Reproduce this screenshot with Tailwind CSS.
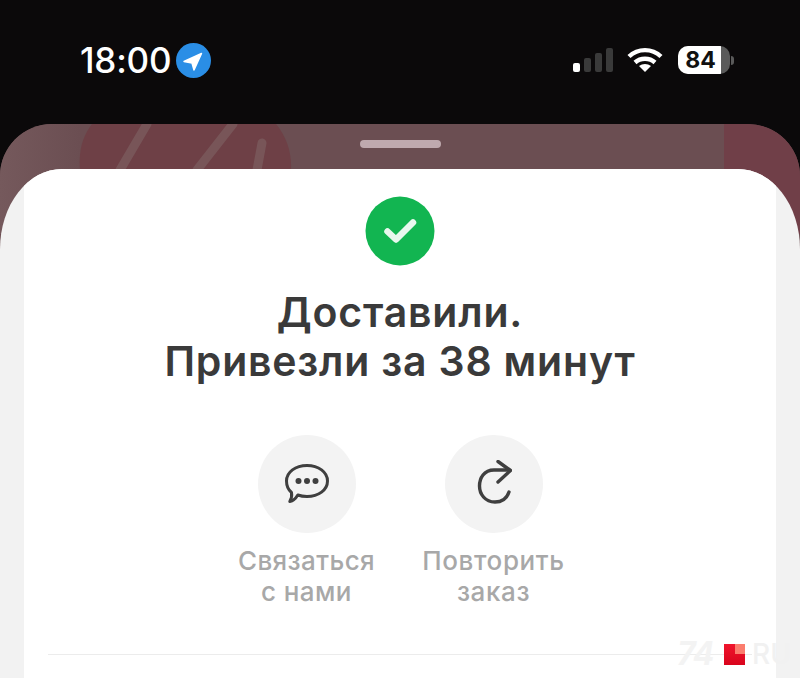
<!DOCTYPE html>
<html lang="ru">
<head>
<meta charset="utf-8">
<script src="https://cdn.jsdelivr.net/npm/@tailwindcss/browser@4"></script>
</head>
<body class="bg-[#0b090a] font-['Inter','Noto_Sans',sans-serif]">
<div class="relative w-[800px] h-[678px] overflow-hidden bg-[#0b090a]">
  <header class="h-[124px] flex items-start justify-between pl-[80px] pr-[66px] pt-[41px]">
    <div class="flex items-center gap-[5px] h-[38px]">
      <span class="text-white text-[35px] leading-[38px] font-medium tracking-[-0.2px]">18:00</span>
      <svg width="35" height="35" viewBox="0 0 35 35"><circle cx="17.5" cy="17.5" r="17.5" fill="#2a8ee6"/><path d="M8 18.500 25.500 10.500 18 27 16 20Z" fill="#fff" stroke="#fff" stroke-width="1.500" stroke-linejoin="round"/></svg>
    </div>
    <div class="flex items-center h-[38px]">
      <svg width="40" height="26" viewBox="0 0 40 26" class="mr-[14px]"><rect x="0" y="16" width="7" height="9" rx="2" fill="#fff"/><rect x="11" y="11" width="7" height="14" rx="2" fill="#3a3a3a"/><rect x="22" y="6" width="7" height="19" rx="2" fill="#3a3a3a"/><rect x="33" y="1" width="7" height="24" rx="2" fill="#3a3a3a"/></svg>
      <svg width="36" height="26" viewBox="0 0 36 26" class="mr-[15px]" fill="none" stroke="#fff" stroke-width="4.400"><path d="M2 9.500C11 1 25 1 34 9.500"/><path d="M8 15.500C13.500 10.500 22.500 10.500 28 15.500"/><path d="M18 25 12 19C15.500 16.300 20.500 16.300 24 19Z" fill="#fff" stroke="none"/></svg>
      <div class="relative w-[52px] h-[28px] rounded-[10px] bg-[#5a5a5a] overflow-hidden">
        <div class="h-full w-[43px] bg-white flex items-center justify-center text-[#111] text-[23px] font-bold leading-none pl-[2px]">84</div>
      </div>
      <div class="w-[3px] h-[9px] ml-[1px] rounded-r-full bg-[#5a5a5a]"></div>
    </div>
  </header>

  <section class="relative h-[554px] rounded-t-[52px] bg-[#6b4e52] overflow-hidden">
    <div class="absolute left-0 top-0 h-[110px] w-[80px] bg-gradient-to-r from-[#75595c] to-[#6b4e52]"></div>
    <svg class="absolute left-[78px] top-0" width="214" height="46" viewBox="0 0 214 46" fill="none">
      <path d="M2 46C0 25 6 10 14 0H198C208 12 214 28 213 46Z" fill="#6e4046"/>
      <path d="M42 46 69 0M119 46 155 0M179 46 184 19" stroke="#785558" stroke-width="9" stroke-linecap="round"/>
    </svg>
    <div class="absolute right-0 top-0 h-[110px] w-[76px] bg-[#703f48]"></div>
    <div class="relative mx-auto mt-[16px] w-[81px] h-[8px] rounded-full bg-[#bfa9ae]"></div>

    <main class="absolute inset-x-0 top-[45px] h-[509px] rounded-tl-[62px_80px] rounded-tr-[62px_80px] bg-[#f2f2f2] overflow-hidden">
      <div class="mx-[24px] h-full bg-white flex flex-col items-center pt-[27px]">
        <svg width="70" height="70" viewBox="0 0 70 70"><circle cx="35" cy="35" r="34.500" fill="#12b551"/><path d="M22.500 35.500 31 43.500 48 26.500" fill="none" stroke="#e8f8ee" stroke-width="6.500" stroke-linecap="round" stroke-linejoin="round"/></svg>
        <h1 class="mt-[22px] text-center text-[41px] leading-[49px] tracking-[0.8px] font-semibold text-[#3a3a3a] whitespace-nowrap">Доставили.<br>Привезли за 38 минут</h1>
        <div class="mt-[49px] flex items-start gap-[46px]">
          <div class="w-[141px] flex flex-col items-center">
            <div class="w-[98px] h-[98px] rounded-full bg-[#f3f3f3] flex items-center justify-center">
              <svg width="46" height="42" viewBox="0 0 46 42" fill="none"><path d="M23 2.500C34.500 2.500 43.500 9 43.500 18S34.500 33.500 23 33.500C19.500 33.500 16.500 33 13.800 32C12 35 8.500 38 5.800 38.500 7.500 35.500 8 32 7.500 29.500 4 26.500 2.500 22.500 2.500 18 2.500 9 11.500 2.500 23 2.500Z" stroke="#3f3f3f" stroke-width="3" stroke-linejoin="round"/><circle cx="14.500" cy="18" r="3" fill="#3f3f3f"/><circle cx="23" cy="18" r="3" fill="#3f3f3f"/><circle cx="31.500" cy="18" r="3" fill="#3f3f3f"/></svg>
            </div>
            <p class="mt-[12px] text-center text-[26px] leading-[31px] tracking-[0.4px] font-medium text-[#a8a8a8] whitespace-nowrap">Связаться<br>с нами</p>
          </div>
          <div class="w-[141px] flex flex-col items-center">
            <div class="w-[98px] h-[98px] rounded-full bg-[#f3f3f3] flex items-center justify-center">
              <svg width="36" height="48" viewBox="0 0 36 48" fill="none" stroke="#3f3f3f" stroke-width="3.400" stroke-linecap="round" stroke-linejoin="round"><path d="M33 10H18C8 10 3.500 18 3.500 26S9 42 19 42C26 42 31 38 33 32"/><path d="M22 1.500 34.500 10.500 22 22"/></svg>
            </div>
            <p class="mt-[12px] text-center text-[26px] leading-[31px] tracking-[0.6px] font-medium text-[#a8a8a8] whitespace-nowrap">Повторить<br>заказ</p>
          </div>
        </div>
        <div class="mt-[47px] w-[704px] h-px bg-[#ececec]"></div>
      </div>
    </main>
  </section>

  <div class="absolute left-[677px] top-[640px] flex items-center h-[28px]">
    <span class="w-[47px] text-[#f3f3f3] text-[32px] leading-[28px] font-bold italic tracking-[-1px]">74</span>
    <span class="w-[21px] h-[21px] bg-gradient-to-b from-[#f0142c] to-[#d9041c] relative"><span class="absolute right-0 top-0 w-[10px] h-[10px] bg-[#fb7d6e]"></span></span>
    <span class="ml-[7px] text-[#f1f1f1] text-[28px] leading-[28px] font-medium">RU</span>
  </div>
</div>
</body>
</html>
